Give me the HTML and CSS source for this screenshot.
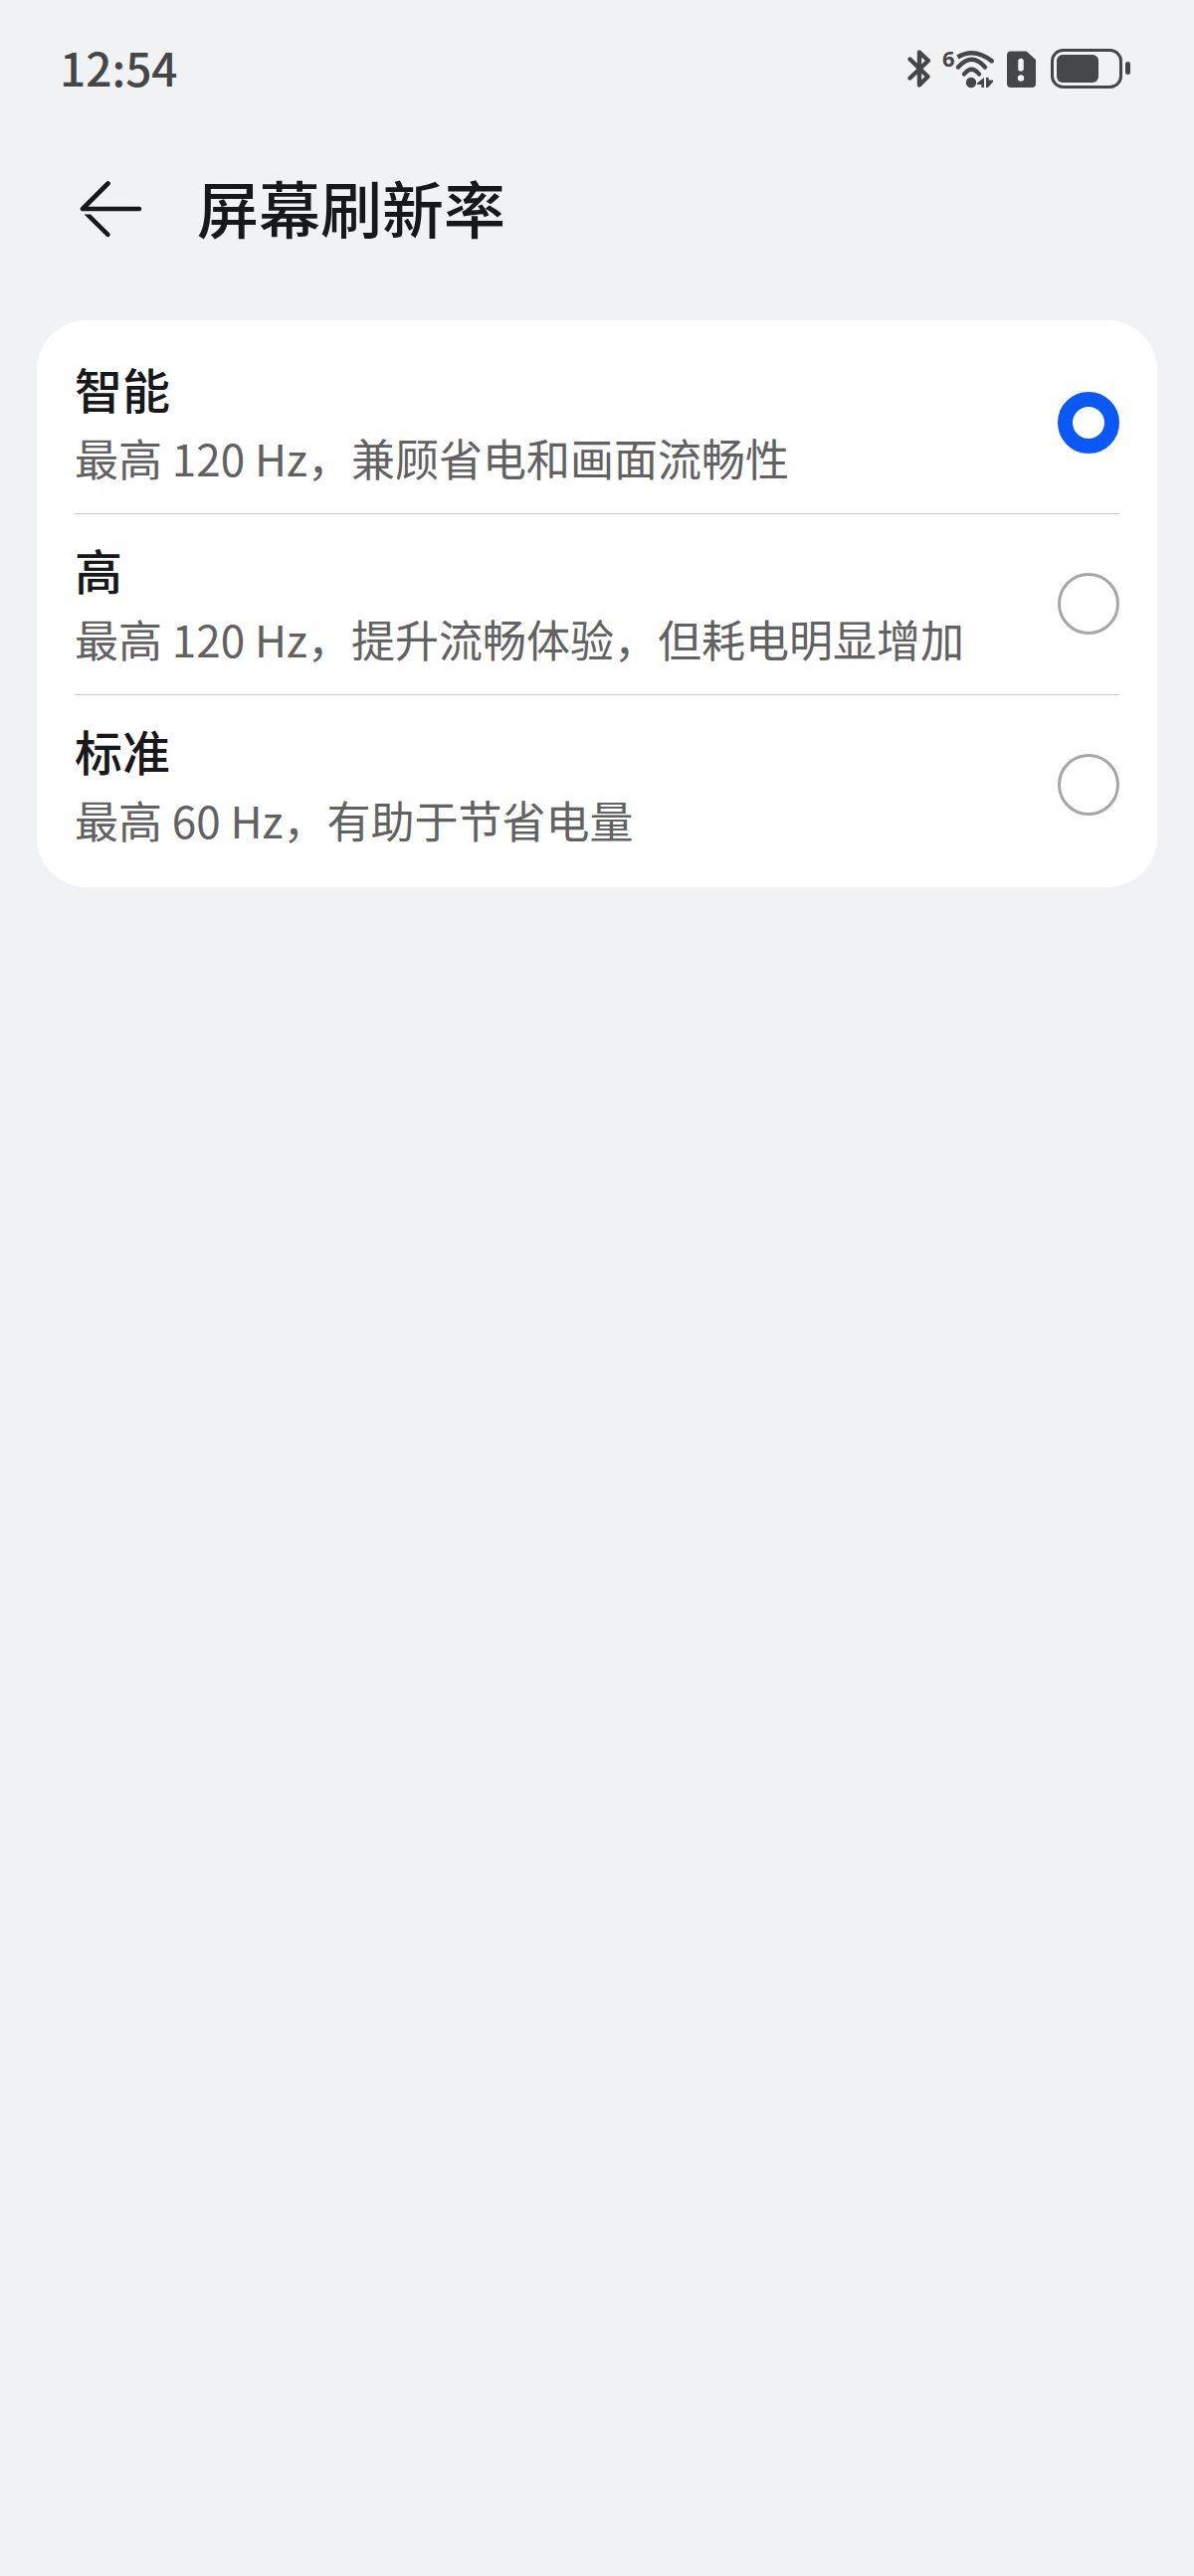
FILE: index.html
```html
<!DOCTYPE html>
<html lang="zh-CN">
<head>
<meta charset="utf-8">
<meta name="viewport" content="width=device-width, initial-scale=1">
<title>屏幕刷新率</title>
<link rel="stylesheet" href="styles.css">
</head>
<body>
<div class="status-bar">
  <time class="clock">12:54</time>
  <div class="status-icons">
    <svg class="icon" width="24" height="40" viewBox="0 0 24 40" role="img" aria-label="蓝牙">
      <path d="M2.500 10.500L20.500 28L12 36.500V23.500M2.500 29.500L21 12L12 3.500V19.500" fill="none" stroke="#454648" stroke-width="4.400" stroke-linecap="round" stroke-linejoin="round"/>
    </svg>
    <svg class="icon" width="52" height="40" viewBox="0 0 52 40" role="img" aria-label="WLAN 6">
      <text class="wifi-generation" x="-1" y="18">6</text>
      <g fill="none" stroke="#454648" stroke-width="4.400" stroke-linecap="round">
        <path d="M14.500 8.500Q31 -1.500 49 12.500" stroke-linecap="butt"/>
        <path d="M15 18.500Q28.500 3 42 18.500"/>
        <path d="M21 25.500Q28.500 16 36 25.500"/>
      </g>
      <g fill="#454648">
        <circle cx="48.800" cy="12.400" r="2.200"/>
        <circle cx="28" cy="34" r="5.200"/>
        <path d="M41 29v10h-2.600v-3H34v-1.600zM43 29h2.600v2.500H50v1.800L45 39h-2z"/>
      </g>
    </svg>
    <svg class="icon icon-sim" width="30" height="40" viewBox="0 0 30 40" role="img" aria-label="SIM 卡异常">
      <path d="M4 2.500H19.500L29 11V35Q29 39 25 39H4Q0 39 0 35V6.500Q0 2.500 4 2.500Z" fill="#454648"/>
      <path d="M14 12.500V20" stroke="#f1f2f4" stroke-width="5.500" stroke-linecap="round"/>
      <circle cx="14" cy="29.500" r="3.200" fill="#f1f2f4"/>
    </svg>
    <svg class="icon icon-battery" width="80" height="40" viewBox="0 0 80 40" role="img" aria-label="电池电量">
      <rect x="1.500" y="1.500" width="69" height="37" rx="11" fill="none" stroke="#454648" stroke-width="3"/>
      <rect x="6" y="6" width="42" height="28" rx="6" fill="#454648"/>
      <rect x="75" y="13" width="5" height="13" rx="2.500" fill="#454648"/>
    </svg>
  </div>
</div>

<header class="title-bar">
  <button class="back" type="button" aria-label="返回">
    <svg width="64" height="60" viewBox="0 0 64 60" aria-hidden="true">
      <path d="M28.500 4.500L3 30H60" fill="none" stroke="#17181a" stroke-width="4.600" stroke-linecap="round" stroke-linejoin="round"/>
      <path d="M4.500 35.500H11L30 54.200A2.300 2.300 0 0 1 26.800 57.600Z" fill="#17181a"/>
    </svg>
  </button>
  <h1 class="title">屏幕刷新率</h1>
</header>

<main class="content">
  <form class="card" aria-label="屏幕刷新率">
    <label class="option">
      <span class="option-text">
        <span class="option-name">智能</span>
        <span class="option-note">最高 120 Hz，兼顾省电和画面流畅性</span>
      </span>
      <input class="radio" type="radio" name="refresh-rate" value="smart" checked>
    </label>
    <label class="option">
      <span class="option-text">
        <span class="option-name">高</span>
        <span class="option-note">最高 120 Hz，提升流畅体验，但耗电明显增加</span>
      </span>
      <input class="radio" type="radio" name="refresh-rate" value="high">
    </label>
    <label class="option">
      <span class="option-text">
        <span class="option-name">标准</span>
        <span class="option-note">最高 60 Hz，有助于节省电量</span>
      </span>
      <input class="radio" type="radio" name="refresh-rate" value="standard">
    </label>
  </form>
</main>
</body>
</html>
```
FILE: styles.css
```css
* {
  box-sizing: border-box;
}

body {
  margin: 0;
  min-height: 100vh;
  background: #f1f2f4;
  color: #17181a;
  font-family: "Noto Sans CJK SC", sans-serif;
}

.status-bar {
  display: flex;
  align-items: center;
  justify-content: space-between;
  height: 138px;
  padding: 0 64px 0 60px;
}

.clock {
  padding-bottom: 4px;
  color: #454648;
  font-size: 46px;
  font-weight: 500;
  line-height: 64px;
}

.status-icons {
  display: flex;
  align-items: center;
  gap: 12px;
}

.icon {
  display: block;
  flex: none;
  overflow: visible;
}

.icon-battery {
  margin-left: 2px;
}

.wifi-generation {
  fill: #454648;
  font-family: "Open Sans", sans-serif;
  font-size: 22px;
  font-weight: 700;
}

.title-bar {
  display: flex;
  align-items: center;
  gap: 54px;
  height: 144px;
  padding: 0 80px;
}

.back {
  padding: 0;
  border: 0;
  background: none;
}

.back svg {
  display: block;
}

.title {
  margin: 0;
  padding-bottom: 4px;
  font-size: 62px;
  font-weight: 500;
  line-height: 80px;
}

.content {
  padding: 40px 37px;
}

.card {
  padding: 12px 38px;
  border-radius: 50px;
  background: #fff;
}

.option {
  display: flex;
  align-items: center;
  justify-content: space-between;
  gap: 40px;
  min-height: 182px;
  box-shadow: 0 1px #c8c8c9;
}

.option:last-child {
  box-shadow: none;
}

.option-text {
  display: flex;
  flex-direction: column;
  gap: 8px;
  padding-bottom: 2px;
}

.option-name {
  font-size: 48px;
  font-weight: 500;
  line-height: 64px;
}

.option-note {
  color: #616162;
  font-size: 44px;
  line-height: 60px;
}

.radio {
  appearance: none;
  flex: none;
  width: 62px;
  height: 62px;
  margin: 0;
  border: 3px solid #a6a6a6;
  border-radius: 50%;
  background: #fff;
}

.radio:checked {
  border: 15px solid #0a59f7;
}
```
